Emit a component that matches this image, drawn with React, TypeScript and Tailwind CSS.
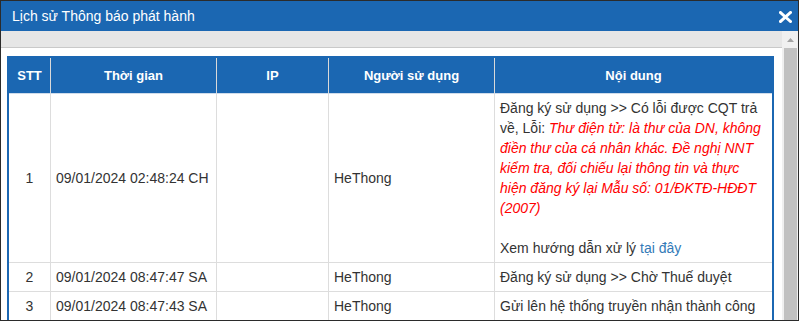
const rows = [
  { stt: '1', time: '09/01/2024 02:48:24 CH', ip: '', user: 'HeThong', long: true },
  { stt: '2', time: '09/01/2024 08:47:47 SA', ip: '', user: 'HeThong', text: 'Đăng ký sử dụng >> Chờ Thuế duyệt' },
  { stt: '3', time: '09/01/2024 08:47:43 SA', ip: '', user: 'HeThong', text: 'Gửi lên hệ thống truyền nhận thành công' },
]

const cols = ['w-[42px]', 'w-[166px]', 'w-[112px]', 'w-[166px]', 'w-[277px]']
const heads = ['STT', 'Thời gian', 'IP', 'Người sử dụng', 'Nội dung']

export default function App() {
  return (
    <div
      className="w-[799px] h-[321px] border border-[#2b2b2b] overflow-hidden flex flex-col bg-white"
      style={{ fontFamily: '"Liberation Sans", Arial, sans-serif' }}
    >
      {/* title bar */}
      <div className="h-[30px] shrink-0 bg-[#1b67b2] flex items-center justify-between pl-[11px] pr-[6px]">
        <span className="text-white text-[14px]">Lịch sử Thông báo phát hành</span>
        <svg width="13" height="12" viewBox="0 0 13 12" className="mt-[1px]">
          <path d="M1.5 1.5 L11.5 10.5 M11.5 1.5 L1.5 10.5" stroke="white" strokeWidth="3" strokeLinecap="square" />
        </svg>
      </div>

      <div className="flex flex-1 min-h-0">
        <div className="flex-1 min-w-0">
          <div className="h-[17px] bg-[#e6e6e6] border-b border-[#c9c9c9]" />
          <div className="pt-[8px] pl-[6px] pr-[8px]">
            <table className="table-fixed border-separate border-spacing-0 w-[767px] border-x-2 border-t-2 border-[#1b67b2] text-[14px] text-[#333]">
              <colgroup>
                {cols.map((c, i) => (
                  <col key={i} className={c} />
                ))}
              </colgroup>
              <thead>
                <tr>
                  {heads.map((h, i) => (
                    <th
                      key={h}
                      className={`h-[36px] p-0 bg-[#1b67b2] text-white text-[13px] font-bold text-center border-b border-[#cfdceb] ${
                        i < 4 ? 'border-r border-r-[#d9d9d9]' : ''
                      }`}
                    >
                      {h}
                    </th>
                  ))}
                </tr>
              </thead>
              <tbody>
                {rows.map((r) => (
                  <tr key={r.stt}>
                    <td className="px-[5px] py-[4px] leading-[20px] text-center border-r border-b border-[#dddddd]">{r.stt}</td>
                    <td className="px-[5px] py-[4px] leading-[20px] border-r border-b border-[#dddddd]">{r.time}</td>
                    <td className="px-[5px] py-[4px] leading-[20px] border-r border-b border-[#dddddd]">{r.ip}</td>
                    <td className="px-[5px] py-[4px] leading-[20px] border-r border-b border-[#dddddd]">{r.user}</td>
                    <td className="px-[5px] py-[4px] leading-[20px] border-b border-[#dddddd]">
                      {r.long ? (
                        <>
                          Đăng ký sử dụng &gt;&gt; Có lỗi được CQT trả về, Lỗi:{' '}
                          <i className="text-[#ff0000]">
                            Thư điện tử: là thư của DN, không điền thư của cá nhân khác. Đề nghị NNT kiểm tra, đối chiếu lại
                            thông tin và thực hiện đăng ký lại Mẫu số: 01/ĐKTĐ-HĐĐT (2007)
                          </i>
                          <br />
                          <br />
                          Xem hướng dẫn xử lý <span className="text-[#337ab7]">tại đây</span>
                        </>
                      ) : (
                        r.text
                      )}
                    </td>
                  </tr>
                ))}
              </tbody>
            </table>
          </div>
        </div>

        {/* scrollbar */}
        <div className="w-[16px] shrink-0 bg-[#f0f0f0] flex flex-col pl-[2px] pr-[1px]">
          <div className="h-[17px] flex items-center justify-center">
            <svg width="7" height="4" viewBox="0 0 7 4">
              <path d="M0 4 L3.5 0 L7 4 Z" fill="#a3a3a3" />
            </svg>
          </div>
          <div className="flex-1 bg-[#c1c1c1]" />
        </div>
      </div>
    </div>
  )
}
